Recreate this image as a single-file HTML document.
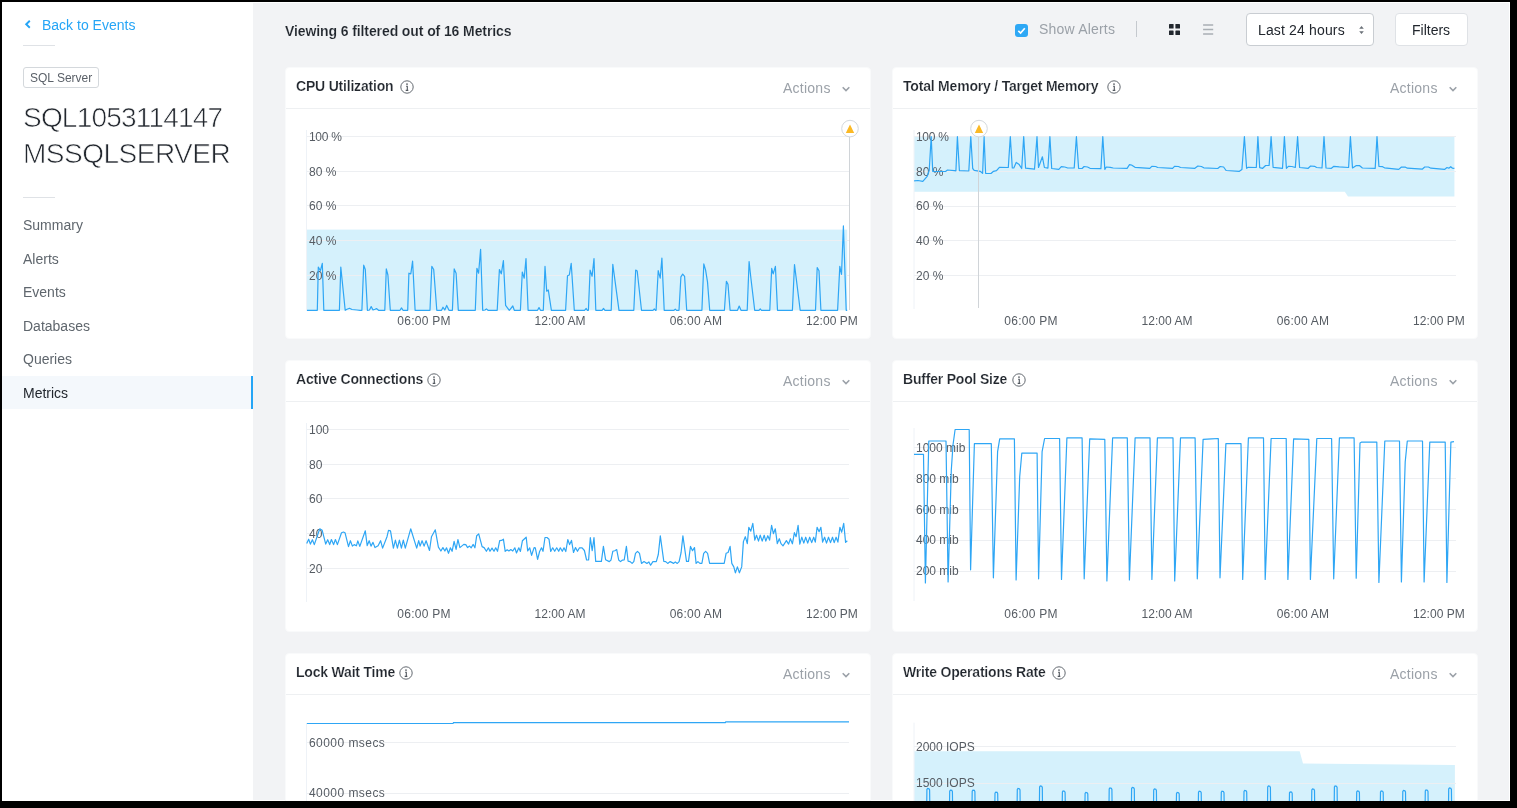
<!DOCTYPE html><html><head><meta charset="utf-8"><style>
*{box-sizing:border-box;margin:0;padding:0}
html,body{width:1517px;height:808px;overflow:hidden;background:#000;font-family:"Liberation Sans",sans-serif}
#win{position:absolute;left:2px;top:2px;width:1508px;height:799px;background:#fff;overflow:hidden;will-change:transform}
#main{position:absolute;left:251px;top:1px;width:1256px;height:797px;background:#f2f3f5}
.abs{position:absolute;white-space:nowrap}
.side-item{position:absolute;left:21px;font-size:14px;color:#5f666d;line-height:16px}
.card{position:absolute;width:586px;height:272px;background:#fff;border-radius:4px;border:1px solid #f9fafb}
.card .title{position:absolute;left:10px;top:10.4px;font-size:14px;font-weight:700;color:#22272e;line-height:16px;letter-spacing:-0.2px;-webkit-text-stroke:0.2px #fff}
.card .hdr{position:absolute;left:0;top:40px;width:584px;height:1px;background:#eef0f2}
.card .actions{position:absolute;left:497px;top:12px;font-size:14px;color:#9ba1a8;line-height:16px;letter-spacing:0.25px}
.ax{font-family:"Liberation Sans",sans-serif;font-size:12px;fill:#565c63}
</style></head><body><div id="win"><div class="abs" style="left:0;top:374px;width:251px;height:33px;background:#f4f8fc"></div><div class="abs" style="left:249px;top:374px;width:2px;height:33px;background:#25a5f6"></div><svg class="abs" style="left:20.5px;top:17px" width="10" height="11" viewBox="0 0 10 11"><path d="M6.8 1.8 L3.2 5.3 L6.8 8.8" fill="none" stroke="#25a5f6" stroke-width="1.9"/></svg><div class="abs" style="left:40px;top:15px;font-size:14px;color:#25a5f6;line-height:16px">Back to Events</div><div class="abs" style="left:21px;top:43px;width:32px;height:1px;background:#dfe2e6"></div><div class="abs" style="left:21px;top:65px;width:76px;height:21px;border:1px solid #d4d8dc;border-radius:3px;font-size:12px;color:#5a6068;line-height:19px;padding-left:6px;padding-top:1px">SQL Server</div><div class="abs" style="left:21px;top:98px;font-size:28px;color:#22272e;line-height:36px;letter-spacing:-0.8px;-webkit-text-stroke:0.7px #fff">SQL1053114147<br><span style="letter-spacing:-0.5px">MSSQLSERVER</span></div><div class="abs" style="left:21px;top:195px;width:32px;height:1px;background:#dfe2e6"></div><div class="side-item" style="left:21px;top:215.0px;color:#5f666d">Summary</div><div class="side-item" style="left:21px;top:248.5px;color:#5f666d">Alerts</div><div class="side-item" style="left:21px;top:282.0px;color:#5f666d">Events</div><div class="side-item" style="left:21px;top:315.5px;color:#5f666d">Databases</div><div class="side-item" style="left:21px;top:349.0px;color:#5f666d">Queries</div><div class="side-item" style="left:21px;top:382.5px;color:#22272e">Metrics</div><div id="main"><div class="abs" style="left:32px;top:20px;font-size:14px;font-weight:700;color:#22272e;line-height:16px;letter-spacing:-0.1px;-webkit-text-stroke:0.15px #f2f3f5">Viewing 6 filtered out of 16 Metrics</div><div class="abs" style="left:762px;top:21px;width:13px;height:13px;border-radius:3px;background:#2ea8f5"></div><svg class="abs" style="left:762px;top:21px" width="13" height="13" viewBox="0 0 13 13"><path d="M3.3 6.8 L5.6 9 L9.8 4.3" fill="none" stroke="#fff" stroke-width="1.7"/></svg><div class="abs" style="left:786px;top:18px;font-size:14px;color:#9ba1a8;line-height:16px;letter-spacing:0.2px">Show Alerts</div><div class="abs" style="left:883px;top:18px;width:1px;height:16px;background:#c5c9ce"></div><svg class="abs" style="left:916px;top:21px" width="11" height="11" viewBox="0 0 11 11" fill="#22272e"><rect x="0" y="0" width="4.6" height="4.6" rx="0.6"/><rect x="6.4" y="0" width="4.6" height="4.6" rx="0.6"/><rect x="0" y="6.4" width="4.6" height="4.6" rx="0.6"/><rect x="6.4" y="6.4" width="4.6" height="4.6" rx="0.6"/></svg><svg class="abs" style="left:950px;top:21px" width="11" height="11" viewBox="0 0 11 11" stroke="#a9aeb4" stroke-width="1.4"><path d="M0.1 1h10.1M0.1 5.5h10.1M0.1 10h10.1"/></svg><div class="abs" style="left:993px;top:10px;width:128px;height:33px;background:#fff;border:1px solid #c9cdd2;border-radius:4px"></div><div class="abs" style="left:1005px;top:19px;font-size:14px;color:#22272e;line-height:16px;letter-spacing:0.15px">Last 24 hours</div><svg class="abs" style="left:1105.7px;top:22.5px" width="5" height="8" viewBox="0 0 5 8" fill="#6b7178"><path d="M2.5 0 L4.8 2.8 H0.2Z M2.5 8 L4.8 5.2 H0.2Z"/></svg><div class="abs" style="left:1142px;top:10px;width:73px;height:33px;background:#fff;border:1px solid #dfe2e6;border-radius:4px"></div><div class="abs" style="left:1159px;top:19px;font-size:14px;color:#22272e;line-height:16px">Filters</div></div><div class="card" style="left:283px;top:65px"><div class="title">CPU Utilization</div><div class="hdr"></div><div class="actions">Actions</div></div><svg class="abs" style="left:397.5px;top:77.9px" width="14" height="14" viewBox="0 0 14 14"><circle cx="7" cy="7" r="6.2" fill="none" stroke="#646a71" stroke-width="1"/><circle cx="7" cy="4.1" r="0.85" fill="#50565d"/><path d="M6.1 6.2h1.2v4.2M5.7 10.4h2.6" fill="none" stroke="#50565d" stroke-width="1.1"/></svg><svg class="abs" style="left:839.2px;top:82.6px" width="10" height="8" viewBox="0 0 10 8"><path d="M1.7 2.3 L5 5.6 L8.3 2.3" fill="none" stroke="#9ba1a8" stroke-width="1.6"/></svg><div class="card" style="left:890px;top:65px"><div class="title">Total Memory / Target Memory</div><div class="hdr"></div><div class="actions">Actions</div></div><svg class="abs" style="left:1105.2px;top:77.9px" width="14" height="14" viewBox="0 0 14 14"><circle cx="7" cy="7" r="6.2" fill="none" stroke="#646a71" stroke-width="1"/><circle cx="7" cy="4.1" r="0.85" fill="#50565d"/><path d="M6.1 6.2h1.2v4.2M5.7 10.4h2.6" fill="none" stroke="#50565d" stroke-width="1.1"/></svg><svg class="abs" style="left:1446.2px;top:82.6px" width="10" height="8" viewBox="0 0 10 8"><path d="M1.7 2.3 L5 5.6 L8.3 2.3" fill="none" stroke="#9ba1a8" stroke-width="1.6"/></svg><div class="card" style="left:283px;top:358px"><div class="title">Active Connections</div><div class="hdr"></div><div class="actions">Actions</div></div><svg class="abs" style="left:424.5px;top:370.9px" width="14" height="14" viewBox="0 0 14 14"><circle cx="7" cy="7" r="6.2" fill="none" stroke="#646a71" stroke-width="1"/><circle cx="7" cy="4.1" r="0.85" fill="#50565d"/><path d="M6.1 6.2h1.2v4.2M5.7 10.4h2.6" fill="none" stroke="#50565d" stroke-width="1.1"/></svg><svg class="abs" style="left:839.2px;top:375.6px" width="10" height="8" viewBox="0 0 10 8"><path d="M1.7 2.3 L5 5.6 L8.3 2.3" fill="none" stroke="#9ba1a8" stroke-width="1.6"/></svg><div class="card" style="left:890px;top:358px"><div class="title">Buffer Pool Size</div><div class="hdr"></div><div class="actions">Actions</div></div><svg class="abs" style="left:1009.7px;top:370.9px" width="14" height="14" viewBox="0 0 14 14"><circle cx="7" cy="7" r="6.2" fill="none" stroke="#646a71" stroke-width="1"/><circle cx="7" cy="4.1" r="0.85" fill="#50565d"/><path d="M6.1 6.2h1.2v4.2M5.7 10.4h2.6" fill="none" stroke="#50565d" stroke-width="1.1"/></svg><svg class="abs" style="left:1446.2px;top:375.6px" width="10" height="8" viewBox="0 0 10 8"><path d="M1.7 2.3 L5 5.6 L8.3 2.3" fill="none" stroke="#9ba1a8" stroke-width="1.6"/></svg><div class="card" style="left:283px;top:651px"><div class="title">Lock Wait Time</div><div class="hdr"></div><div class="actions">Actions</div></div><svg class="abs" style="left:397.3px;top:663.9px" width="14" height="14" viewBox="0 0 14 14"><circle cx="7" cy="7" r="6.2" fill="none" stroke="#646a71" stroke-width="1"/><circle cx="7" cy="4.1" r="0.85" fill="#50565d"/><path d="M6.1 6.2h1.2v4.2M5.7 10.4h2.6" fill="none" stroke="#50565d" stroke-width="1.1"/></svg><svg class="abs" style="left:839.2px;top:668.6px" width="10" height="8" viewBox="0 0 10 8"><path d="M1.7 2.3 L5 5.6 L8.3 2.3" fill="none" stroke="#9ba1a8" stroke-width="1.6"/></svg><div class="card" style="left:890px;top:651px"><div class="title">Write Operations Rate</div><div class="hdr"></div><div class="actions">Actions</div></div><svg class="abs" style="left:1049.5px;top:663.9px" width="14" height="14" viewBox="0 0 14 14"><circle cx="7" cy="7" r="6.2" fill="none" stroke="#646a71" stroke-width="1"/><circle cx="7" cy="4.1" r="0.85" fill="#50565d"/><path d="M6.1 6.2h1.2v4.2M5.7 10.4h2.6" fill="none" stroke="#50565d" stroke-width="1.1"/></svg><svg class="abs" style="left:1446.2px;top:668.6px" width="10" height="8" viewBox="0 0 10 8"><path d="M1.7 2.3 L5 5.6 L8.3 2.3" fill="none" stroke="#9ba1a8" stroke-width="1.6"/></svg><svg id="ov" width="1517" height="808" viewBox="0 0 1517 808" style="position:absolute;left:-2px;top:-2px"><rect x="307" y="229.6" width="540.2" height="80.7" fill="#d5f1fc"/><line x1="307" y1="136.5" x2="849" y2="136.5" stroke="#edeff2" stroke-width="1"/><line x1="307" y1="171.5" x2="849" y2="171.5" stroke="#edeff2" stroke-width="1"/><line x1="307" y1="205.5" x2="849" y2="205.5" stroke="#edeff2" stroke-width="1"/><line x1="307" y1="240.5" x2="849" y2="240.5" stroke="#edeff2" stroke-width="1"/><line x1="307" y1="275.5" x2="849" y2="275.5" stroke="#edeff2" stroke-width="1"/><line x1="306.5" y1="130" x2="306.5" y2="311" stroke="#eef2f7" stroke-width="1"/><text x="309" y="140.7" class="ax" letter-spacing="-0.3">100 %</text><text x="309" y="175.5" class="ax" letter-spacing="0">80 %</text><text x="309" y="210.2" class="ax" letter-spacing="0">60 %</text><text x="309" y="245.0" class="ax" letter-spacing="0">40 %</text><text x="309" y="279.8" class="ax" letter-spacing="0">20 %</text><polyline points="307.0,310.3 317.3,310.3 318.3,267.0 320.4,270.7 322.3,263.3 323.8,310.3 339.4,310.3 340.8,267.0 345.2,310.3 347.0,309.2 349.5,308.3 352.0,309.5 357.0,310.0 360.0,310.3 361.9,310.3 363.7,265.2 365.3,269.5 367.4,310.3 369.5,310.0 371.2,306.6 373.0,310.0 375.0,309.3 376.7,308.6 378.5,310.3 384.8,310.3 386.3,268.9 387.9,275.0 390.3,310.3 400.0,310.3 401.5,307.9 403.0,310.3 407.7,310.3 408.9,273.2 410.8,273.9 412.6,261.2 415.1,310.3 430.0,310.3 431.8,266.4 433.7,269.5 436.8,310.3 441.5,310.3 443.0,307.2 444.8,310.0 446.7,305.4 449.0,310.3 452.4,310.3 454.2,268.9 456.1,273.2 458.3,310.3 475.3,310.3 476.9,268.3 478.6,273.2 480.6,249.3 482.7,310.3 485.0,310.0 486.4,308.9 488.0,310.3 497.2,310.3 499.4,269.5 501.3,273.8 503.4,260.6 505.6,305.4 509.3,310.3 512.8,306.0 514.3,310.3 520.4,310.3 522.3,272.0 524.2,278.2 526.0,258.6 528.1,310.3 537.5,310.3 539.0,307.6 540.5,310.3 543.3,310.3 545.0,266.4 546.7,291.2 548.3,290.0 551.4,310.3 565.6,310.3 567.5,275.7 569.3,275.0 571.2,263.3 574.3,310.3 584.5,310.3 586.2,308.5 587.4,310.3 588.4,310.3 590.1,270.1 592.1,276.3 594.0,258.6 595.8,310.3 602.0,310.3 603.5,308.5 605.0,310.3 611.2,310.3 612.8,264.3 619.0,310.3 633.8,310.3 635.7,270.1 637.2,271.0 641.5,310.3 653.0,310.3 654.3,308.9 655.5,310.3 656.1,310.3 658.2,270.7 660.2,278.2 661.9,258.1 664.2,310.3 674.0,310.3 675.3,309.1 676.5,310.3 679.0,310.3 680.9,276.9 682.7,274.1 684.6,276.3 686.7,310.3 701.9,310.3 703.8,263.9 705.6,270.1 707.5,281.9 709.7,310.3 724.4,310.3 726.4,281.3 728.0,284.4 730.1,310.3 737.5,310.3 739.2,306.0 741.0,310.3 747.2,310.3 749.1,261.5 750.9,278.2 754.7,310.3 759.0,310.3 760.2,308.8 761.5,310.3 769.8,310.3 771.7,268.3 773.2,273.8 775.4,266.4 777.5,310.3 792.4,310.3 794.5,264.6 800.2,310.3 815.5,310.3 817.2,267.6 819.0,270.7 820.9,310.3 837.6,310.3 839.8,266.4 841.5,274.5 843.4,225.9 846.2,310.3 847.2,310.3" fill="none" stroke="#2ea6f5" stroke-width="1.2" stroke-linejoin="round"/><text x="424" y="325" class="ax" text-anchor="middle" letter-spacing="0.25">06:00 PM</text><text x="560" y="325" class="ax" text-anchor="middle" letter-spacing="0.05">12:00 AM</text><text x="696" y="325" class="ax" text-anchor="middle" letter-spacing="0.25">06:00 AM</text><text x="832" y="325" class="ax" text-anchor="middle" letter-spacing="0.05">12:00 PM</text><line x1="849.5" y1="137" x2="849.5" y2="310" stroke="#d0d4d8" stroke-width="1"/><circle cx="850.0" cy="128.6" r="8.3" fill="#fff" stroke="#d3d8dd" stroke-width="1"/><path d="M850.0 124.6 L854.2 133 L845.8 133 Z" fill="#fbb925"/><polygon points="914.1,136.7 1454.4,136.7 1454.4,196.6 1348,196.6 1344.8,191.7 914.1,191.7" fill="#d5f1fc"/><line x1="914" y1="136.5" x2="1456" y2="136.5" stroke="#edeff2" stroke-width="1"/><line x1="914" y1="171.5" x2="1456" y2="171.5" stroke="#edeff2" stroke-width="1"/><line x1="914" y1="206.5" x2="1456" y2="206.5" stroke="#edeff2" stroke-width="1"/><line x1="914" y1="240.5" x2="1456" y2="240.5" stroke="#edeff2" stroke-width="1"/><line x1="914" y1="275.5" x2="1456" y2="275.5" stroke="#edeff2" stroke-width="1"/><line x1="914.0" y1="130" x2="914.0" y2="309" stroke="#eef2f7" stroke-width="1"/><text x="916" y="140.7" class="ax" letter-spacing="-0.3">100 %</text><text x="916" y="175.5" class="ax" letter-spacing="0">80 %</text><text x="916" y="210.3" class="ax" letter-spacing="0">60 %</text><text x="916" y="244.9" class="ax" letter-spacing="0">40 %</text><text x="916" y="279.7" class="ax" letter-spacing="0">20 %</text><polyline points="914.1,180.9 918.0,180.5 922.8,181.4 927.2,176.4 929.2,170.5 931.2,136.7 932.7,171.3 945.5,171.5 947.5,170.0 954.4,170.7 955.9,171.0 957.4,136.7 959.4,170.7 968.8,171.0 970.8,136.7 972.7,168.5 974.2,170.3 980.2,171.3 982.6,173.3 984.1,136.7 985.6,173.3 991.0,173.5 993.5,171.3 996.5,170.7 999.4,167.3 1008.3,167.5 1010.3,136.7 1012.3,168.0 1013.8,168.0 1016.2,162.4 1019.2,164.6 1021.7,168.5 1023.7,136.7 1025.6,168.2 1034.5,169.2 1037.0,136.7 1038.5,167.5 1042.4,156.8 1044.4,167.5 1047.9,168.2 1049.9,136.7 1051.7,168.5 1058.8,169.3 1061.3,166.7 1064.8,167.0 1067.7,168.0 1074.2,168.0 1076.4,136.7 1078.6,168.3 1082.1,168.5 1084.1,166.5 1087.5,167.0 1090.0,168.3 1100.9,168.7 1102.8,136.7 1104.8,169.3 1106.3,167.0 1110.3,167.3 1113.2,168.0 1127.1,168.3 1129.5,164.6 1131.5,165.0 1135.0,167.3 1149.8,168.3 1151.8,166.3 1155.7,166.5 1157.7,167.5 1172.6,168.3 1174.5,166.3 1178.5,166.5 1180.5,167.5 1194.9,168.3 1197.9,166.0 1201.4,166.5 1203.8,167.8 1217.7,168.5 1220.2,166.5 1223.6,167.0 1226.1,170.5 1239.4,171.3 1241.9,169.5 1244.4,136.7 1246.6,168.3 1248.3,167.3 1256.3,167.5 1257.9,136.7 1259.7,167.7 1262.7,168.3 1265.6,165.5 1269.1,165.5 1271.1,136.7 1273.1,167.3 1282.5,168.3 1284.4,136.7 1286.4,168.3 1288.4,166.3 1291.9,166.5 1295.3,167.5 1297.6,136.7 1299.6,167.5 1308.2,168.3 1310.6,166.0 1314.6,166.3 1316.6,167.5 1322.0,168.0 1324.0,136.7 1326.0,168.0 1331.4,168.3 1333.9,166.3 1339.3,166.9 1348.6,167.5 1350.4,136.6 1352.5,168.0 1356.0,165.7 1359.7,165.7 1362.4,168.0 1375.2,168.4 1377.0,136.6 1378.9,166.3 1382.6,166.7 1384.5,167.8 1398.7,169.4 1401.2,167.2 1405.5,167.2 1407.4,168.2 1422.2,169.2 1424.7,167.0 1428.4,167.0 1430.9,168.2 1444.5,169.4 1447.0,167.5 1448.8,168.2 1450.7,166.7 1452.5,168.2 1454.4,168.4" fill="none" stroke="#2ea6f5" stroke-width="1.2" stroke-linejoin="round"/><text x="1031" y="325" class="ax" text-anchor="middle" letter-spacing="0.25">06:00 PM</text><text x="1167" y="325" class="ax" text-anchor="middle" letter-spacing="0.05">12:00 AM</text><text x="1303" y="325" class="ax" text-anchor="middle" letter-spacing="0.25">06:00 AM</text><text x="1439" y="325" class="ax" text-anchor="middle" letter-spacing="0.05">12:00 PM</text><line x1="978.5" y1="137" x2="978.5" y2="308" stroke="#d0d4d8" stroke-width="1"/><circle cx="979.0" cy="128.6" r="8.3" fill="#fff" stroke="#d3d8dd" stroke-width="1"/><path d="M979.0 124.6 L983.2 133 L974.8 133 Z" fill="#fbb925"/><line x1="307" y1="429.5" x2="849" y2="429.5" stroke="#edeff2" stroke-width="1"/><line x1="307" y1="464.5" x2="849" y2="464.5" stroke="#edeff2" stroke-width="1"/><line x1="307" y1="498.5" x2="849" y2="498.5" stroke="#edeff2" stroke-width="1"/><line x1="307" y1="533.5" x2="849" y2="533.5" stroke="#edeff2" stroke-width="1"/><line x1="307" y1="568.5" x2="849" y2="568.5" stroke="#edeff2" stroke-width="1"/><line x1="306.5" y1="423" x2="306.5" y2="602" stroke="#eef2f7" stroke-width="1"/><text x="309" y="433.8" class="ax" letter-spacing="0">100</text><text x="309" y="468.7" class="ax" letter-spacing="0">80</text><text x="309" y="503.2" class="ax" letter-spacing="0">60</text><text x="309" y="538.1" class="ax" letter-spacing="0">40</text><text x="309" y="572.7" class="ax" letter-spacing="0">20</text><polyline points="306.7,543.6 308.7,539.2 310.4,544.1 312.4,539.7 314.3,544.6 319.8,528.8 322.2,530.3 325.7,544.1 327.7,539.7 329.7,544.6 331.4,539.5 333.6,544.6 335.4,539.5 337.4,544.6 341.5,532.7 343.5,532.0 345.0,532.7 348.5,546.6 350.4,540.7 352.4,546.1 354.2,544.6 356.4,545.8 357.8,540.9 359.8,546.4 365.3,530.8 367.2,545.6 369.2,540.7 371.0,546.1 373.0,542.4 375.0,547.6 378.1,545.8 380.6,540.7 382.6,548.1 387.0,536.7 388.5,530.3 390.5,530.8 393.4,548.1 395.4,540.2 397.4,548.1 399.4,540.2 401.4,548.1 403.3,540.2 405.3,548.1 410.7,528.8 416.7,548.1 418.7,540.7 420.1,546.1 422.1,540.7 424.1,546.1 426.1,540.7 429.5,550.5 431.5,536.7 435.3,529.8 438.4,547.1 440.9,551.0 442.9,547.6 444.9,551.0 446.5,547.8 448.5,553.3 450.4,547.8 452.1,551.3 454.1,541.4 456.1,549.4 457.9,539.5 459.9,547.6 463.8,544.4 465.8,544.6 467.6,547.6 469.6,546.1 471.2,547.8 473.2,544.4 474.9,547.8 476.7,535.7 478.7,533.9 482.1,546.6 484.1,547.6 486.4,551.3 488.4,547.8 490.0,551.3 492.0,548.1 494.0,551.3 495.7,547.8 497.5,551.3 499.7,540.6 501.6,540.4 503.4,539.2 505.2,551.3 507.2,549.8 508.9,551.0 510.8,549.6 512.8,551.0 514.8,547.8 516.5,553.0 518.8,547.8 520.4,551.5 522.4,540.8 526.2,537.2 527.7,551.0 529.7,547.8 531.6,555.3 534.1,547.6 535.3,547.8 537.6,559.3 539.6,551.5 541.5,547.8 543.0,551.3 545.0,537.5 547.0,537.5 549.0,539.2 550.7,551.5 552.7,547.8 554.7,551.3 556.7,547.8 558.7,551.3 560.3,547.8 562.3,551.3 564.0,547.8 565.8,551.5 567.8,539.5 569.6,544.6 571.5,540.4 573.5,552.5 575.5,547.6 577.5,551.3 579.5,547.8 582.1,547.8 584.4,550.5 586.6,560.0 588.6,560.0 590.3,537.7 592.2,550.7 594.0,537.7 595.7,561.4 601.4,561.4 603.4,546.4 605.6,559.7 609.3,561.6 611.0,560.0 612.8,551.3 614.8,550.7 616.7,549.6 618.7,560.0 620.5,561.6 622.2,560.2 624.2,560.0 626.4,546.4 628.1,561.2 630.1,561.6 632.1,563.4 633.8,561.6 635.5,553.3 637.5,551.3 639.5,553.3 641.5,563.4 644.0,561.6 646.9,563.4 648.9,561.9 650.6,565.2 652.9,561.6 656.3,561.6 658.3,554.5 660.3,535.9 663.8,561.4 665.7,561.6 667.7,563.4 670.2,561.6 673.7,563.4 675.3,561.9 677.3,563.4 679.1,561.6 681.1,552.5 682.9,535.9 686.5,561.4 688.5,561.4 690.5,546.4 692.5,550.7 694.5,547.6 696.1,563.4 697.9,561.6 699.9,563.4 701.9,563.4 703.7,553.3 705.6,551.3 707.6,553.3 709.6,563.4 724.2,563.4 726.1,553.3 728.1,552.5 730.1,546.4 731.8,563.4 733.8,566.9 735.4,572.8 737.4,566.9 739.4,572.8 741.7,566.9 743.4,541.6 745.3,536.7 747.3,543.6 748.8,527.3 750.8,531.2 752.8,523.3 754.8,540.1 756.5,535.2 758.5,541.1 760.2,535.2 762.2,541.1 764.2,535.2 765.8,541.1 767.8,535.7 769.6,540.1 771.6,525.3 773.4,533.7 775.3,528.8 777.3,543.6 779.3,538.7 781.0,543.6 783.0,545.8 786.4,540.6 788.6,544.1 790.4,538.7 792.4,543.8 794.4,532.7 796.1,536.7 798.1,525.3 799.8,544.1 801.8,537.2 803.8,543.1 805.7,537.2 807.7,543.1 809.7,537.2 811.7,542.6 813.7,537.2 815.3,542.1 817.1,527.3 819.1,531.7 820.9,527.3 822.6,542.1 824.6,537.2 826.5,543.1 828.5,537.2 830.5,542.6 832.5,537.2 834.2,542.6 836.1,537.2 837.9,542.1 839.9,527.3 841.7,532.2 843.7,523.3 845.6,542.4 847.3,540.8" fill="none" stroke="#2ea6f5" stroke-width="1.2" stroke-linejoin="round"/><text x="424" y="618" class="ax" text-anchor="middle" letter-spacing="0.25">06:00 PM</text><text x="560" y="618" class="ax" text-anchor="middle" letter-spacing="0.05">12:00 AM</text><text x="696" y="618" class="ax" text-anchor="middle" letter-spacing="0.25">06:00 AM</text><text x="832" y="618" class="ax" text-anchor="middle" letter-spacing="0.05">12:00 PM</text><line x1="914" y1="447.5" x2="1456" y2="447.5" stroke="#edeff2" stroke-width="1"/><line x1="914" y1="478.5" x2="1456" y2="478.5" stroke="#edeff2" stroke-width="1"/><line x1="914" y1="509.5" x2="1456" y2="509.5" stroke="#edeff2" stroke-width="1"/><line x1="914" y1="540.5" x2="1456" y2="540.5" stroke="#edeff2" stroke-width="1"/><line x1="914" y1="571.5" x2="1456" y2="571.5" stroke="#edeff2" stroke-width="1"/><line x1="914.0" y1="428" x2="914.0" y2="601" stroke="#eef2f7" stroke-width="1"/><text x="916" y="451.9" class="ax" letter-spacing="0">1000 mib</text><text x="916" y="482.9" class="ax" letter-spacing="0">800 mib</text><text x="916" y="513.6" class="ax" letter-spacing="0">600 mib</text><text x="916" y="544.3" class="ax" letter-spacing="0">400 mib</text><text x="916" y="575.4" class="ax" letter-spacing="0">200 mib</text><polyline points="914.0,454.3 923.5,454.3 925.4,583.0 928.8,441.0 946.0,441.0 948.1,582.0 951.3,470.0 953.0,445.0 955.1,429.5 969.2,429.5 970.6,569.8 974.4,443.6 991.3,443.6 993.4,577.8 997.6,451.6 999.7,438.9 1014.4,438.9 1016.1,580.0 1019.7,476.8 1021.8,453.2 1037.1,453.2 1038.6,578.8 1042.1,451.6 1044.6,438.5 1059.6,438.5 1061.5,579.5 1066.9,437.9 1082.1,437.9 1084.2,578.8 1089.7,438.9 1104.8,439.4 1106.9,581.0 1112.6,437.9 1127.3,437.9 1129.4,579.9 1135.1,437.9 1150.0,437.9 1151.9,579.5 1157.4,437.9 1173.0,437.9 1174.7,581.0 1180.5,437.9 1195.1,437.9 1197.3,578.8 1203.1,439.4 1211.6,438.9 1218.3,438.5 1220.0,577.8 1225.9,443.6 1241.0,443.6 1242.7,579.5 1248.4,437.9 1263.5,437.9 1265.2,579.5 1271.1,438.5 1286.2,438.5 1287.9,579.5 1293.6,438.9 1308.8,439.4 1310.4,579.5 1316.8,438.5 1331.6,438.5 1333.7,578.8 1339.4,437.9 1354.1,437.9 1356.2,578.2 1360.0,443.1 1361.7,442.1 1376.8,442.1 1378.9,582.4 1384.8,441.0 1399.5,441.0 1401.4,582.0 1405.2,462.0 1407.3,441.0 1422.5,441.0 1424.1,582.0 1429.8,442.1 1445.2,442.1 1446.9,582.4 1450.9,442.1 1454.0,441.6" fill="none" stroke="#2ea6f5" stroke-width="1.2" stroke-linejoin="round"/><text x="1031" y="618" class="ax" text-anchor="middle" letter-spacing="0.25">06:00 PM</text><text x="1167" y="618" class="ax" text-anchor="middle" letter-spacing="0.05">12:00 AM</text><text x="1303" y="618" class="ax" text-anchor="middle" letter-spacing="0.25">06:00 AM</text><text x="1439" y="618" class="ax" text-anchor="middle" letter-spacing="0.05">12:00 PM</text><line x1="307" y1="742.5" x2="849" y2="742.5" stroke="#edeff2" stroke-width="1"/><line x1="307" y1="793.5" x2="849" y2="793.5" stroke="#edeff2" stroke-width="1"/><line x1="306.5" y1="723" x2="306.5" y2="805" stroke="#eef2f7" stroke-width="1"/><text x="309" y="746.5" class="ax" letter-spacing="0.45">60000 msecs</text><text x="309" y="797.3" class="ax" letter-spacing="0.45">40000 msecs</text><polyline points="306.9,723.5 453.0,723.5 453.5,722.6 725.3,722.6 725.8,721.9 849.0,721.9" fill="none" stroke="#2ea6f5" stroke-width="1.2"/><polygon points="914.2,751.3 1299.7,751.3 1303,763.6 1453.9,765.1 1454.9,765.1 1454.9,805 914.2,805" fill="#d5f1fc"/><line x1="914" y1="746.5" x2="1456" y2="746.5" stroke="#edeff2" stroke-width="1"/><line x1="914" y1="783.5" x2="1456" y2="783.5" stroke="#edeff2" stroke-width="1"/><line x1="914.0" y1="722.6" x2="914.0" y2="805" stroke="#eef2f7" stroke-width="1"/><text x="916" y="751.1" class="ax" letter-spacing="0">2000 IOPS</text><text x="916" y="787.3" class="ax" letter-spacing="0">1500 IOPS</text><polyline points="926.7,806.0 926.9,789.5 927.6,788.5 929.0,788.8 929.6,790.0 929.8,806.0" fill="none" stroke="#2ea6f5" stroke-width="1.2"/><polyline points="949.5,806.0 949.7,791.1 950.4,790.1 951.8,790.4 952.4,791.6 952.6,806.0" fill="none" stroke="#2ea6f5" stroke-width="1.2"/><polyline points="972.0,806.0 972.2,791.1 972.9,790.1 974.3,790.4 974.9,791.6 975.1,806.0" fill="none" stroke="#2ea6f5" stroke-width="1.2"/><polyline points="994.8,806.0 995.0,793.1 995.7,792.1 997.1,792.4 997.7,793.6 997.9,806.0" fill="none" stroke="#2ea6f5" stroke-width="1.2"/><polyline points="1017.1,806.0 1017.3,789.5 1018.0,788.5 1019.4,788.8 1020.0,790.0 1020.2,806.0" fill="none" stroke="#2ea6f5" stroke-width="1.2"/><polyline points="1039.4,806.0 1039.6,786.9 1040.3,785.9 1041.7,786.2 1042.3,787.4 1042.5,806.0" fill="none" stroke="#2ea6f5" stroke-width="1.2"/><polyline points="1062.2,806.0 1062.4,791.9 1063.1,790.9 1064.5,791.2 1065.1,792.4 1065.3,806.0" fill="none" stroke="#2ea6f5" stroke-width="1.2"/><polyline points="1084.9,806.0 1085.1,793.4 1085.8,792.4 1087.2,792.7 1087.8,793.9 1088.0,806.0" fill="none" stroke="#2ea6f5" stroke-width="1.2"/><polyline points="1109.0,806.0 1109.2,788.9 1109.9,787.9 1111.3,788.2 1111.9,789.4 1112.1,806.0" fill="none" stroke="#2ea6f5" stroke-width="1.2"/><polyline points="1131.4,806.0 1131.6,788.5 1132.3,787.5 1133.7,787.8 1134.3,789.0 1134.5,806.0" fill="none" stroke="#2ea6f5" stroke-width="1.2"/><polyline points="1153.5,806.0 1153.7,789.9 1154.4,788.9 1155.8,789.2 1156.4,790.4 1156.6,806.0" fill="none" stroke="#2ea6f5" stroke-width="1.2"/><polyline points="1176.3,806.0 1176.5,793.4 1177.2,792.4 1178.6,792.7 1179.2,793.9 1179.4,806.0" fill="none" stroke="#2ea6f5" stroke-width="1.2"/><polyline points="1198.3,806.0 1198.5,792.2 1199.2,791.2 1200.6,791.5 1201.2,792.7 1201.4,806.0" fill="none" stroke="#2ea6f5" stroke-width="1.2"/><polyline points="1221.1,806.0 1221.3,792.2 1222.0,791.2 1223.4,791.5 1224.0,792.7 1224.2,806.0" fill="none" stroke="#2ea6f5" stroke-width="1.2"/><polyline points="1243.8,806.0 1244.0,791.5 1244.7,790.5 1246.1,790.8 1246.7,792.0 1246.9,806.0" fill="none" stroke="#2ea6f5" stroke-width="1.2"/><polyline points="1267.5,806.0 1267.7,786.9 1268.4,785.9 1269.8,786.2 1270.4,787.4 1270.6,806.0" fill="none" stroke="#2ea6f5" stroke-width="1.2"/><polyline points="1289.3,806.0 1289.5,792.8 1290.2,791.8 1291.6,792.1 1292.2,793.3 1292.4,806.0" fill="none" stroke="#2ea6f5" stroke-width="1.2"/><polyline points="1311.6,806.0 1311.8,789.9 1312.5,788.9 1313.9,789.2 1314.5,790.4 1314.7,806.0" fill="none" stroke="#2ea6f5" stroke-width="1.2"/><polyline points="1334.2,806.0 1334.4,786.9 1335.1,785.9 1336.5,786.2 1337.1,787.4 1337.3,806.0" fill="none" stroke="#2ea6f5" stroke-width="1.2"/><polyline points="1356.5,806.0 1356.7,791.9 1357.4,790.9 1358.8,791.2 1359.4,792.4 1359.6,806.0" fill="none" stroke="#2ea6f5" stroke-width="1.2"/><polyline points="1380.3,806.0 1380.5,791.9 1381.2,790.9 1382.6,791.2 1383.2,792.4 1383.4,806.0" fill="none" stroke="#2ea6f5" stroke-width="1.2"/><polyline points="1402.6,806.0 1402.8,791.5 1403.5,790.5 1404.9,790.8 1405.5,792.0 1405.7,806.0" fill="none" stroke="#2ea6f5" stroke-width="1.2"/><polyline points="1425.1,806.0 1425.3,790.9 1426.0,789.9 1427.4,790.2 1428.0,791.4 1428.2,806.0" fill="none" stroke="#2ea6f5" stroke-width="1.2"/><polyline points="1448.5,806.0 1448.7,788.9 1449.4,787.9 1450.8,788.2 1451.4,789.4 1451.6,806.0" fill="none" stroke="#2ea6f5" stroke-width="1.2"/></svg></div></body></html>
